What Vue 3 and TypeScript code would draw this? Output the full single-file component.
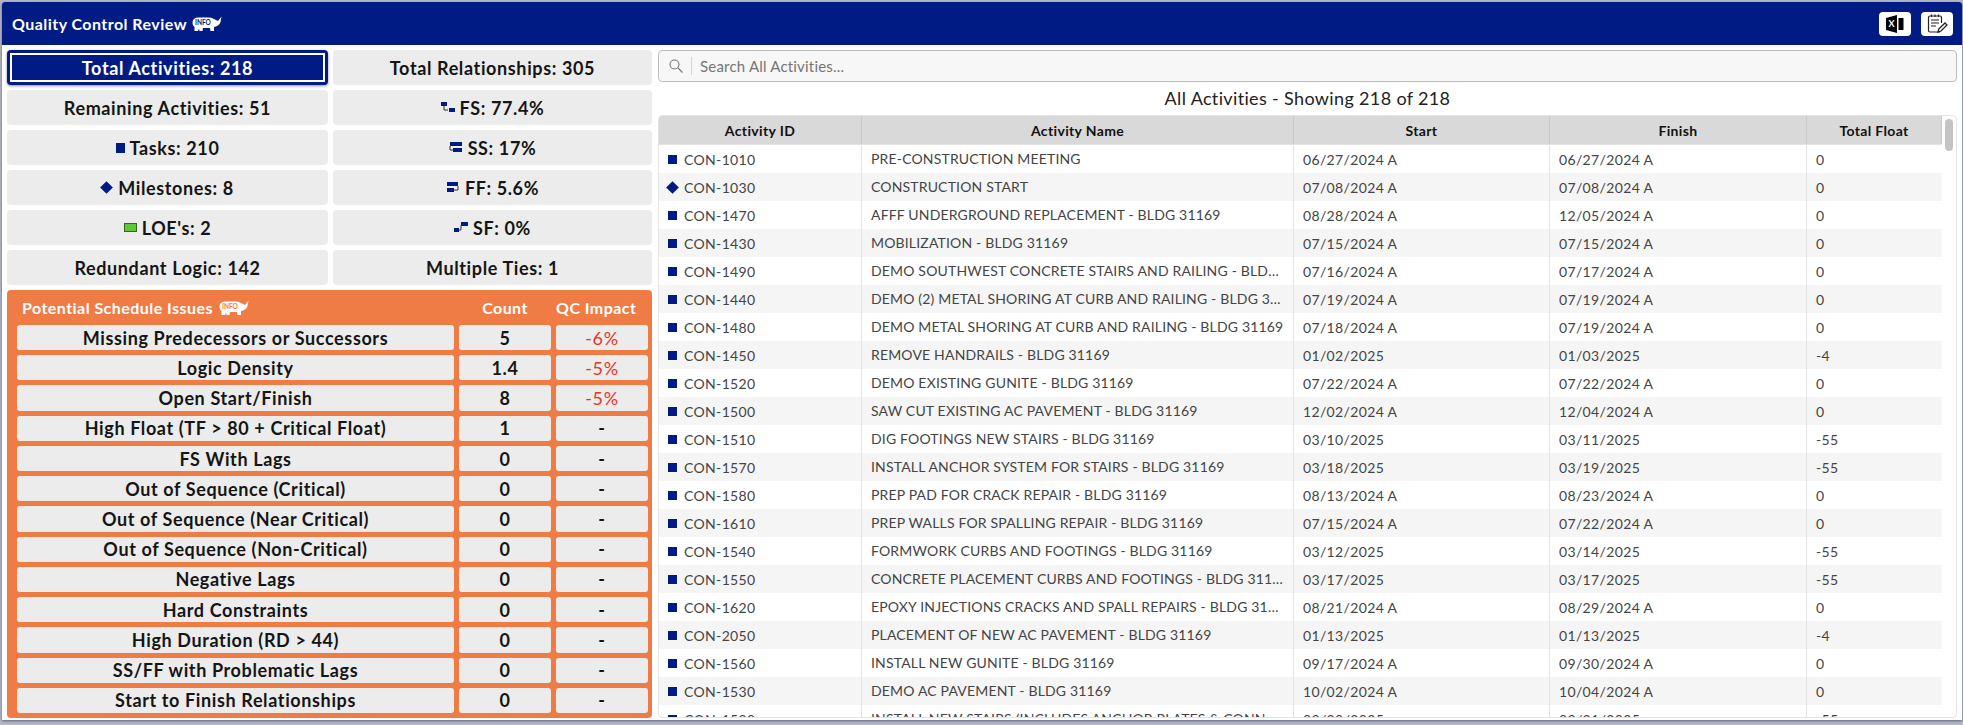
<script setup lang="ts">
interface Activity {
  id: string;
  name: string;
  start: string;
  finish: string;
  float: string;
  milestone?: boolean;
}

const stats = [
  { left: 'Remaining Activities: 51', right: 'FS: 77.4%', rel: 'fs' },
  { left: 'Tasks: 210', leftIcon: 'task', right: 'SS: 17%', rel: 'ss' },
  { left: 'Milestones: 8', leftIcon: 'milestone', right: 'FF: 5.6%', rel: 'ff' },
  { left: "LOE's: 2", leftIcon: 'loe', right: 'SF: 0%', rel: 'sf' },
  { left: 'Redundant Logic: 142', right: 'Multiple Ties: 1' },
];

const issues = [
  { name: 'Missing Predecessors or Successors', count: '5', impact: '-6%' },
  { name: 'Logic Density', count: '1.4', impact: '-5%' },
  { name: 'Open Start/Finish', count: '8', impact: '-5%' },
  { name: 'High Float (TF > 80 + Critical Float)', count: '1', impact: '-' },
  { name: 'FS With Lags', count: '0', impact: '-' },
  { name: 'Out of Sequence (Critical)', count: '0', impact: '-' },
  { name: 'Out of Sequence (Near Critical)', count: '0', impact: '-' },
  { name: 'Out of Sequence (Non-Critical)', count: '0', impact: '-' },
  { name: 'Negative Lags', count: '0', impact: '-' },
  { name: 'Hard Constraints', count: '0', impact: '-' },
  { name: 'High Duration (RD > 44)', count: '0', impact: '-' },
  { name: 'SS/FF with Problematic Lags', count: '0', impact: '-' },
  { name: 'Start to Finish Relationships', count: '0', impact: '-' },
];

const activities: Activity[] = [
  { id: 'CON-1010', name: 'PRE-CONSTRUCTION MEETING', start: '06/27/2024 A', finish: '06/27/2024 A', float: '0' },
  { id: 'CON-1030', name: 'CONSTRUCTION START', start: '07/08/2024 A', finish: '07/08/2024 A', float: '0', milestone: true },
  { id: 'CON-1470', name: 'AFFF UNDERGROUND REPLACEMENT - BLDG 31169', start: '08/28/2024 A', finish: '12/05/2024 A', float: '0' },
  { id: 'CON-1430', name: 'MOBILIZATION - BLDG 31169', start: '07/15/2024 A', finish: '07/15/2024 A', float: '0' },
  { id: 'CON-1490', name: 'DEMO SOUTHWEST CONCRETE STAIRS AND RAILING - BLDG 31169', start: '07/16/2024 A', finish: '07/17/2024 A', float: '0' },
  { id: 'CON-1440', name: 'DEMO (2) METAL SHORING AT CURB AND RAILING - BLDG 31169', start: '07/19/2024 A', finish: '07/19/2024 A', float: '0' },
  { id: 'CON-1480', name: 'DEMO METAL SHORING AT CURB AND RAILING - BLDG 31169', start: '07/18/2024 A', finish: '07/19/2024 A', float: '0' },
  { id: 'CON-1450', name: 'REMOVE HANDRAILS - BLDG 31169', start: '01/02/2025', finish: '01/03/2025', float: '-4' },
  { id: 'CON-1520', name: 'DEMO EXISTING GUNITE - BLDG 31169', start: '07/22/2024 A', finish: '07/22/2024 A', float: '0' },
  { id: 'CON-1500', name: 'SAW CUT EXISTING AC PAVEMENT - BLDG 31169', start: '12/02/2024 A', finish: '12/04/2024 A', float: '0' },
  { id: 'CON-1510', name: 'DIG FOOTINGS NEW STAIRS - BLDG 31169', start: '03/10/2025', finish: '03/11/2025', float: '-55' },
  { id: 'CON-1570', name: 'INSTALL ANCHOR SYSTEM FOR STAIRS - BLDG 31169', start: '03/18/2025', finish: '03/19/2025', float: '-55' },
  { id: 'CON-1580', name: 'PREP PAD FOR CRACK REPAIR - BLDG 31169', start: '08/13/2024 A', finish: '08/23/2024 A', float: '0' },
  { id: 'CON-1610', name: 'PREP WALLS FOR SPALLING REPAIR - BLDG 31169', start: '07/15/2024 A', finish: '07/22/2024 A', float: '0' },
  { id: 'CON-1540', name: 'FORMWORK CURBS AND FOOTINGS - BLDG 31169', start: '03/12/2025', finish: '03/14/2025', float: '-55' },
  { id: 'CON-1550', name: 'CONCRETE PLACEMENT CURBS AND FOOTINGS - BLDG 31169', start: '03/17/2025', finish: '03/17/2025', float: '-55' },
  { id: 'CON-1620', name: 'EPOXY INJECTIONS CRACKS AND SPALL REPAIRS - BLDG 31169', start: '08/21/2024 A', finish: '08/29/2024 A', float: '0' },
  { id: 'CON-2050', name: 'PLACEMENT OF NEW AC PAVEMENT - BLDG 31169', start: '01/13/2025', finish: '01/13/2025', float: '-4' },
  { id: 'CON-1560', name: 'INSTALL NEW GUNITE - BLDG 31169', start: '09/17/2024 A', finish: '09/30/2024 A', float: '0' },
  { id: 'CON-1530', name: 'DEMO AC PAVEMENT - BLDG 31169', start: '10/02/2024 A', finish: '10/04/2024 A', float: '0' },
  { id: 'CON-1590', name: 'INSTALL NEW STAIRS (INCLUDES ANCHOR PLATES & CONN...', start: '03/20/2025', finish: '03/21/2025', float: '-55' },
];

// white rhino silhouette behind the INFO label
const rhinoBody =
  'M0.5 6C1 3 3 1.5 6 1.5L17 1.5C20 1.5 22 3 24 4L26 5L29.500 0.500L28.500 6C28 8 26 10 24 10.500L22 11L22 15L18.500 15L18 12L11 12L10.500 15L7.500 15L7 12.500L6 15L2.500 15L2.500 11C1 10 0.500 8 0.500 6Z';
</script>

<template>
  <div class="window">
    <header class="topbar">
      <div class="app-title">
        Quality Control Review
        <svg class="rhino" viewBox="0 0 30 16">
          <path :d="rhinoBody" fill="#fff" />
          <text x="3" y="9" class="rhino-text" fill="#001b84">INFO</text>
        </svg>
      </div>
      <div class="top-actions">
        <button class="top-btn" type="button" aria-label="Export to Excel">
          <svg width="20" height="18" viewBox="0 0 20 18">
            <path d="M1 3L12 0V18L1 15Z" fill="#000" />
            <rect x="13.500" y="3" width="5" height="12" fill="#000" />
            <text x="3.600" y="12" class="excel-x" fill="#fff">X</text>
          </svg>
        </button>
        <button class="top-btn" type="button" aria-label="Notes">
          <svg width="22" height="20" viewBox="0 0 22 20" fill="none" stroke="#222" stroke-width="1.200">
            <path d="M14 18H4C3 18 2.500 17.500 2.500 16.500V3.500C2.500 2.500 3 2 4 2H14C15 2 15.500 2.500 15.500 3.500V9" />
            <path d="M5.500 0.500V3M9 0.500V3M12.500 0.500V3M5 6H13M5 9H13M5 12H10" />
            <path d="M12 18L12.800 15L19 9L21 11L15 17Z" stroke-width="1.300" />
          </svg>
        </button>
      </div>
    </header>

    <main class="content">
      <section class="left">
        <div class="stats">
          <div class="tile tile-active"><span>Total Activities: 218</span></div>
          <div class="tile">Total Relationships: 305</div>
          <template v-for="row in stats" :key="row.left">
            <div class="tile">
              <span v-if="row.leftIcon" :class="['mark', 'mark-' + row.leftIcon]"></span>
              {{ row.left }}
            </div>
            <div class="tile">
              <svg v-if="row.rel" class="rel" viewBox="0 0 14 11" width="14" height="11">
                <g v-if="row.rel === 'fs'">
                  <rect x="0" y="0" width="6" height="4" fill="#001b84" />
                  <rect x="8" y="6" width="6" height="4" fill="#001b84" />
                  <path d="M3 4V8H7" fill="none" stroke="#333" />
                </g>
                <g v-else-if="row.rel === 'ss'">
                  <rect x="1" y="0" width="12" height="4" fill="#001b84" />
                  <rect x="4" y="6" width="9" height="4" fill="#001b84" />
                  <path d="M1 4V8H4" fill="none" stroke="#333" />
                </g>
                <g v-else-if="row.rel === 'ff'">
                  <rect x="1" y="0" width="11" height="4" fill="#001b84" />
                  <rect x="1" y="6" width="7" height="4" fill="#001b84" />
                  <path d="M12 4V8H8" fill="none" stroke="#333" />
                </g>
                <g v-else>
                  <rect x="7" y="0" width="7" height="4" fill="#001b84" />
                  <rect x="0" y="6" width="5" height="4" fill="#001b84" />
                  <path d="M7 3V8H5" fill="none" stroke="#333" />
                </g>
              </svg>
              {{ row.right }}
            </div>
          </template>
        </div>

        <div class="issues">
          <div class="issues-head">
            <div class="issues-title">
              Potential Schedule Issues
              <svg class="rhino" viewBox="0 0 30 16">
                <path :d="rhinoBody" fill="#fff" />
                <text x="3" y="9" class="rhino-text" fill="#f07c45">INFO</text>
              </svg>
            </div>
            <div class="issues-col">Count</div>
            <div class="issues-col impact-col">QC Impact</div>
          </div>
          <div class="issues-list">
            <template v-for="issue in issues" :key="issue.name">
              <div class="cell">{{ issue.name }}</div>
              <div class="cell">{{ issue.count }}</div>
              <div class="cell" :class="{ 'cell-bad': issue.impact !== '-' }">{{ issue.impact }}</div>
            </template>
          </div>
        </div>
      </section>

      <section class="right">
        <div class="search">
          <svg class="search-icon" width="14" height="14" viewBox="0 0 14 14" fill="none" stroke="#777" stroke-width="1.100">
            <circle cx="5.500" cy="5.500" r="4.500" />
            <path d="M9 9L13.500 13.500" />
          </svg>
          <span class="search-divider"></span>
          <span class="search-text">Search All Activities...</span>
        </div>
        <div class="list-title">All Activities - Showing 218 of 218</div>

        <div class="table">
          <div class="table-main">
            <div class="row head">
              <div>Activity ID</div>
              <div>Activity Name</div>
              <div>Start</div>
              <div>Finish</div>
              <div>Total Float</div>
            </div>
            <div v-for="a in activities" :key="a.id" class="row">
              <div class="id-cell">
                <span class="row-mark" :class="a.milestone ? 'row-diamond' : 'row-square'"></span>
                {{ a.id }}
              </div>
              <div class="name-cell">{{ a.name }}</div>
              <div>{{ a.start }}</div>
              <div>{{ a.finish }}</div>
              <div>{{ a.float }}</div>
            </div>
          </div>
          <div class="scroll-track"><div class="scroll-thumb"></div></div>
        </div>
      </section>
    </main>
  </div>
</template>

<style>
html,
body {
  margin: 0;
  height: 100%;
  overflow: hidden;
  background: #b4b8c6;
}
</style>

<style scoped>
.window {
  margin: 2px 1px 0 2px;
  height: 718px;
  background: #fff;
  display: flex;
  flex-direction: column;
  font-family: Lato, 'Liberation Sans', sans-serif;
  color: #111;
  overflow: hidden;
  border-radius: 3px 3px 0 0;
  box-shadow: 0 1px 3px rgba(20, 25, 60, 0.55);
}

.topbar {
  height: 43px;
  flex: none;
  background: #001b84;
  display: flex;
  align-items: center;
  justify-content: space-between;
  padding: 0 9px 0 10px;
}

.app-title {
  display: flex;
  align-items: center;
  gap: 5px;
  color: #fff;
  font-size: 16px;
  font-weight: 700;
  letter-spacing: 0.45px;
}

.rhino {
  width: 30px;
  height: 16px;
}

.rhino-text {
  font: 700 6.500px Lato, sans-serif;
  letter-spacing: 0;
}

.top-actions {
  display: flex;
  gap: 10px;
}

.top-btn {
  width: 32px;
  height: 24px;
  padding: 0;
  border: none;
  border-radius: 4px;
  background: #fff;
  display: flex;
  align-items: center;
  justify-content: center;
}

.excel-x {
  font: 700 9px Lato, sans-serif;
}

.content {
  flex: 1;
  min-height: 0;
  display: flex;
  gap: 6px;
  padding: 5px 5px 2px 5px;
}

.left {
  width: 645px;
  flex: none;
  display: flex;
  flex-direction: column;
  gap: 5px;
}

.stats {
  display: grid;
  grid-template-columns: 321px 319px;
  grid-auto-rows: 35px;
  gap: 5px;
}

.tile {
  background: #ececec;
  border-radius: 4px;
  display: flex;
  align-items: center;
  justify-content: center;
  gap: 5px;
  font-size: 18px;
  font-weight: 700;
  letter-spacing: 0.62px;
  color: #151515;
}

.tile-active {
  background: #001b84;
  padding: 3px;
  box-shadow: 0 1px 3px rgba(0, 0, 0, 0.45);
}

.tile-active span {
  flex: 1;
  height: 100%;
  box-sizing: border-box;
  border: 2px solid #fff;
  color: #fff;
  display: flex;
  align-items: center;
  justify-content: center;
}

.mark {
  display: inline-block;
  flex: none;
}

.mark-task {
  width: 9px;
  height: 10px;
  background: #001b84;
}

.mark-milestone {
  width: 9px;
  height: 9px;
  background: #001b84;
  transform: rotate(45deg);
  margin: 0 2px 0 1px;
}

.mark-loe {
  width: 11px;
  height: 7px;
  background: #5dc83a;
  border: 1px solid #2e6b1e;
}

.rel {
  flex: none;
}

.issues {
  flex: 1;
  min-height: 0;
  background: #f07c45;
  border-radius: 4px;
  padding: 0 4px 5px 10px;
  display: flex;
  flex-direction: column;
}

.issues-head {
  height: 35px;
  flex: none;
  display: grid;
  grid-template-columns: 437px 92px 92px;
  column-gap: 5px;
  align-items: center;
  color: #fff;
  font-size: 16px;
  font-weight: 700;
  letter-spacing: 0.45px;
}

.issues-title {
  display: flex;
  align-items: center;
  gap: 6px;
  padding-left: 5px;
}

.issues-col {
  text-align: center;
}

.impact-col {
  text-align: left;
}

.issues-list {
  flex: 1;
  min-height: 0;
  display: grid;
  grid-template-columns: 437px 92px 92px;
  grid-template-rows: repeat(13, 1fr);
  gap: 5px;
}

.cell {
  background: #ececec;
  border-radius: 3px;
  display: flex;
  align-items: center;
  justify-content: center;
  font-size: 18px;
  font-weight: 700;
  letter-spacing: 0.62px;
  color: #151515;
}

.cell-bad {
  color: #f0321e;
  font-weight: 400;
}

.right {
  flex: 1;
  min-width: 0;
  display: flex;
  flex-direction: column;
}

.search {
  height: 32px;
  flex: none;
  box-sizing: border-box;
  background: #f7f7f7;
  border: 1px solid #bdbdbd;
  border-radius: 4px;
  display: flex;
  align-items: center;
  padding-left: 10px;
}

.search-divider {
  width: 1px;
  height: 18px;
  background: #d5d5d5;
  margin: 0 8px 0 8px;
}

.search-text {
  font-size: 15px;
  color: #757575;
  letter-spacing: 0.2px;
}

.list-title {
  height: 32px;
  padding-bottom: 1px;
  flex: none;
  display: flex;
  align-items: center;
  justify-content: center;
  font-size: 18px;
  letter-spacing: 0.35px;
  color: #222;
}

.table {
  flex: 1;
  min-height: 0;
  display: flex;
  border: 1px solid #e4e4e4;
  border-radius: 4px;
  overflow: hidden;
}

.table-main {
  width: 1283px;
  flex: none;
  overflow: hidden;
}

.row {
  display: grid;
  grid-template-columns: 203px 432px 256px 257px 135px;
  height: 28px;
  font-size: 14px;
  letter-spacing: 0.35px;
  color: #444;
}

.row:nth-child(odd) {
  background: #f5f5f5;
}

.row > div {
  box-sizing: border-box;
  padding: 0 9px;
  display: flex;
  align-items: center;
  border-right: 1px solid #e4e4e4;
  white-space: nowrap;
  overflow: hidden;
}

.row > div:last-child {
  border-right: none;
}

.row .name-cell {
  display: block;
  line-height: 28px;
  letter-spacing: 0.17px;
  text-overflow: ellipsis;
}

.row .id-cell {
  padding-left: 9px;
  gap: 7px;
}

.row.head {
  background: #d9d9d9;
  color: #111;
  font-weight: 700;
  height: 29px;
  border-bottom: 1px solid #e4e4e4;
  box-sizing: border-box;
}

.row.head > div {
  justify-content: center;
  border-right: 1px solid #c9c9c9;
}

.row-mark {
  flex: none;
  width: 9px;
  height: 9px;
  background: #001b84;
}

.row-diamond {
  transform: rotate(45deg);
}

.scroll-track {
  flex: 1;
  padding: 3px 3px 0 3px;
}

.scroll-thumb {
  height: 32px;
  background: #c4c4c4;
  border-radius: 4px;
}
</style>
